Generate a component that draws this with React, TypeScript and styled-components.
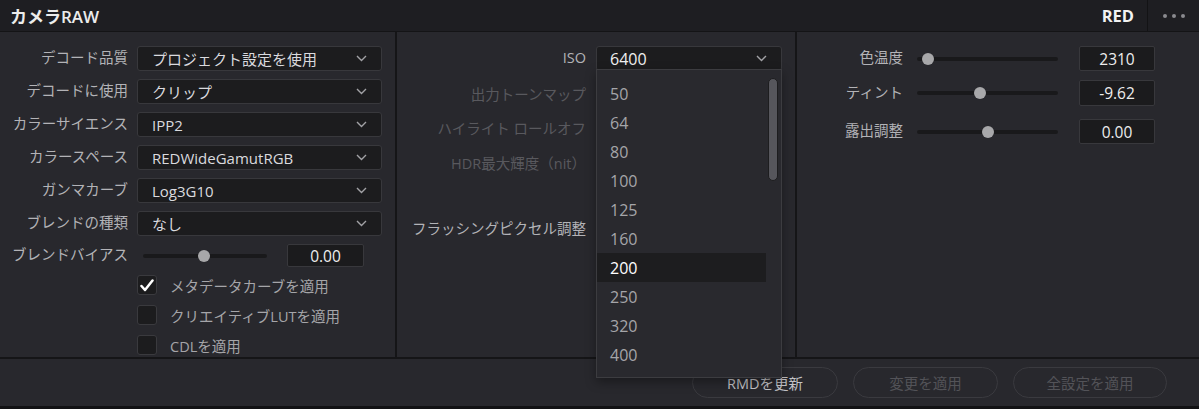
import React from "react";
import styled, { createGlobalStyle } from "styled-components";

const GlobalStyle = createGlobalStyle`
  html, body { margin: 0; padding: 0; background: #121214; }
  body { font-family: "Open Sans", "Noto Sans CJK JP", sans-serif; }
  * { box-sizing: border-box; }
`;

const Frame = styled.div`
  width: 1199px;
  height: 409px;
  display: flex;
  flex-direction: column;
  background: #28282d;
  overflow: hidden;
`;

const Header = styled.header`
  height: 32px;
  flex: none;
  display: flex;
  align-items: stretch;
  background: #1e1e22;
  border-bottom: 1px solid #141416;
`;

const Title = styled.div`
  flex: 1;
  display: flex;
  align-items: center;
  padding-left: 10px;
  color: #ececec;
  font-size: 17px;
  font-weight: 600;
`;

const Tag = styled.div`
  display: flex;
  align-items: center;
  padding-right: 13px;
  color: #f2f2f2;
  font-size: 16.5px;
  font-weight: 700;
  border-right: 1px solid #131315;
`;

const Menu = styled.div`
  width: 51px;
  display: flex;
  align-items: center;
  justify-content: center;
  gap: 5px;
`;

const Dot = styled.span`
  width: 4px;
  height: 4px;
  border-radius: 50%;
  background: #8a8a8e;
`;

const Body = styled.div`
  height: 327px;
  flex: none;
  display: flex;
  border-bottom: 2px solid #151517;
`;

const Panel = styled.section<{ $w?: number; $gap: number; $clip?: boolean }>`
  ${(p) => (p.$w ? `width: ${p.$w}px; flex: none;` : `flex: 1;`)}
  border-right: 2px solid #151517;
  padding-top: 14px;
  display: flex;
  flex-direction: column;
  gap: ${(p) => p.$gap}px;
  overflow: ${(p) => (p.$clip ? "hidden" : "visible")};
  position: relative;
  &:last-child {
    border-right: none;
  }
`;

const FieldRow = styled.div<{ $cols: string; $gap: number; $h?: number; $mt?: number }>`
  display: grid;
  grid-template-columns: ${(p) => p.$cols};
  column-gap: ${(p) => p.$gap}px;
  align-items: center;
  height: ${(p) => p.$h ?? 25}px;
  margin-top: ${(p) => p.$mt ?? 0}px;
  flex: none;
`;

const Label = styled.span<{ $dim?: boolean }>`
  text-align: right;
  white-space: nowrap;
  font-size: 14.5px;
  line-height: 1;
  color: ${(p) => (p.$dim ? "#59595e" : "#b3b3b7")};
`;

const SelectBox = styled.div<{ $pl: number }>`
  position: relative;
  height: 25px;
  display: flex;
  align-items: center;
  justify-content: space-between;
  padding: 0 14px 0 ${(p) => p.$pl}px;
  background: #1c1c1e;
  border: 1px solid #38383c;
  border-radius: 3px;
  white-space: nowrap;
`;

const SelectValue = styled.span<{ $num?: boolean }>`
  font-size: ${(p) => (p.$num ? 16 : 15)}px;
  color: ${(p) => (p.$num ? "#f0f0f0" : "#dadade")};
`;

const Chevron = () => (
  <svg width="11" height="7" viewBox="0 0 11 7">
    <polyline points="1,1 5.5,5.5 10,1" fill="none" stroke="#a2a2a6" strokeWidth="1.4" />
  </svg>
);

const SliderCell = styled.div`
  display: flex;
  align-items: center;
`;

const Track = styled.div<{ $w: number; $ml?: number }>`
  position: relative;
  width: ${(p) => p.$w}px;
  margin-left: ${(p) => p.$ml ?? 0}px;
  height: 4px;
  border-radius: 2px;
  background: #19191b;
`;

const Thumb = styled.span<{ $pos: number }>`
  position: absolute;
  top: 50%;
  left: ${(p) => p.$pos}%;
  width: 12px;
  height: 12px;
  margin: -6px 0 0 -6px;
  border-radius: 50%;
  background: #a8a8aa;
`;

const ValueBox = styled.div<{ $w: number; $h: number; $ml?: number }>`
  width: ${(p) => p.$w}px;
  height: ${(p) => p.$h}px;
  margin-left: ${(p) => p.$ml ?? 0}px;
  background: #1b1b1d;
  border: 1px solid #38383c;
  border-radius: 2px;
  display: flex;
  align-items: center;
  justify-content: center;
  color: #ededed;
  font-size: 15.5px;
`;

const CheckGroup = styled.div`
  display: flex;
  flex-direction: column;
  gap: 10px;
  padding-left: 137px;
`;

const CheckRow = styled.label`
  display: flex;
  align-items: center;
  gap: 13px;
  height: 20px;
  flex: none;
  font-size: 14.5px;
  color: #a5a5a9;
  white-space: nowrap;
`;

const Box = styled.span`
  width: 20px;
  height: 20px;
  flex: none;
  border-radius: 3px;
  background: #1c1c1e;
  border: 1px solid #3a3a3e;
  display: flex;
  align-items: center;
  justify-content: center;
`;

const ListBox = styled.ul`
  position: absolute;
  top: calc(100% - 1px);
  left: -1px;
  width: calc(100% + 2px);
  height: 309px;
  margin: 0;
  padding: 9px 0 0 0;
  list-style: none;
  background: #29292e;
  border: 1px solid #3c3c40;
  z-index: 10;
  box-shadow: 0 4px 10px rgba(0, 0, 0, 0.35);
`;

const ListItem = styled.li<{ $selected?: boolean }>`
  width: 169px;
  height: 29px;
  display: flex;
  align-items: center;
  padding-left: 13px;
  font-size: 16px;
  color: ${(p) => (p.$selected ? "#ffffff" : "#a5a5a9")};
  background: ${(p) => (p.$selected ? "#1d1d1f" : "transparent")};
`;

const ScrollThumb = styled.span`
  position: absolute;
  top: 8px;
  right: 3px;
  width: 10px;
  height: 103px;
  border-radius: 5px;
  background: #56565c;
  border: 1px solid #1d1d1f;
`;

const Footer = styled.footer`
  flex: 1;
  display: flex;
  align-items: center;
  justify-content: flex-end;
  gap: 15px;
  padding-right: 32px;
  border-bottom: 3px solid #121214;
`;

const PillButton = styled.button<{ $w: number; $enabled?: boolean }>`
  width: ${(p) => p.$w}px;
  height: 31px;
  padding: 0;
  border-radius: 16px;
  background: transparent;
  border: 1px solid #3a3a3f;
  color: ${(p) => (p.$enabled ? "#c2c2c6" : "#535358")};
  font-family: inherit;
  font-size: 14.5px;
`;

const leftSelects: [string, string][] = [
  ["デコード品質", "プロジェクト設定を使用"],
  ["デコードに使用", "クリップ"],
  ["カラーサイエンス", "IPP2"],
  ["カラースペース", "REDWideGamutRGB"],
  ["ガンマカーブ", "Log3G10"],
  ["ブレンドの種類", "なし"],
];

const checks: [string, boolean][] = [
  ["メタデータカーブを適用", true],
  ["クリエイティブLUTを適用", false],
  ["CDLを適用", false],
];

const isoValues = ["50", "64", "80", "100", "125", "160", "200", "250", "320", "400"];

const midLabels: { label: string; mt: number }[] = [
  { label: "出力トーンマップ", mt: 11.5 },
  { label: "ハイライト ロールオフ", mt: 9 },
  { label: "HDR最大輝度（nit）", mt: 10 },
];

const rightSliders: { label: string; pos: number; value: string; h: number; mt: number }[] = [
  { label: "色温度", pos: 8, value: "2310", h: 25, mt: 0 },
  { label: "ティント", pos: 45, value: "-9.62", h: 26, mt: 0 },
  { label: "露出調整", pos: 50, value: "0.00", h: 25, mt: 4 },
];

const LEFT_COLS = "128px 245px";
const MID_COLS = "189px 186px";
const RIGHT_COLS = "106px 141px 83px";

export default function App() {
  return (
    <>
      <GlobalStyle />
      <Frame>
        <Header>
          <Title>カメラRAW</Title>
          <Tag>RED</Tag>
          <Menu>
            <Dot />
            <Dot />
            <Dot />
          </Menu>
        </Header>
        <Body>
          <Panel $w={397} $gap={8} $clip>
            {leftSelects.map(([label, value]) => (
              <FieldRow key={label} $cols={LEFT_COLS} $gap={9}>
                <Label>{label}</Label>
                <SelectBox $pl={14}>
                  <SelectValue>{value}</SelectValue>
                  <Chevron />
                </SelectBox>
              </FieldRow>
            ))}
            <FieldRow $cols={LEFT_COLS} $gap={9} $h={23}>
              <Label>ブレンドバイアス</Label>
              <SliderCell>
                <Track $w={124} $ml={6}>
                  <Thumb $pos={49} />
                </Track>
                <ValueBox $w={77} $h={23} $ml={20}>
                  0.00
                </ValueBox>
              </SliderCell>
            </FieldRow>
            <CheckGroup>
              {checks.map(([label, on]) => (
                <CheckRow key={label}>
                  <Box>
                    {on && (
                      <svg width="14" height="13" viewBox="0 0 14 13">
                        <polyline
                          points="1.5,7 5,11 12.5,1.5"
                          fill="none"
                          stroke="#ffffff"
                          strokeWidth="2.5"
                          strokeLinecap="round"
                          strokeLinejoin="round"
                        />
                      </svg>
                    )}
                  </Box>
                  {label}
                </CheckRow>
              ))}
            </CheckGroup>
          </Panel>

          <Panel $w={400} $gap={0}>
            <FieldRow $cols={MID_COLS} $gap={10}>
              <Label>ISO</Label>
              <SelectBox $pl={13}>
                <SelectValue $num>6400</SelectValue>
                <Chevron />
                <ListBox>
                  {isoValues.map((v) => (
                    <ListItem key={v} $selected={v === "200"}>
                      {v}
                    </ListItem>
                  ))}
                  <ScrollThumb />
                </ListBox>
              </SelectBox>
            </FieldRow>
            {midLabels.map((m) => (
              <FieldRow key={m.label} $cols={MID_COLS} $gap={10} $mt={m.mt}>
                <Label $dim>{m.label}</Label>
              </FieldRow>
            ))}
            <FieldRow $cols={MID_COLS} $gap={10} $mt={40}>
              <Label>フラッシングピクセル調整</Label>
            </FieldRow>
          </Panel>

          <Panel $gap={9}>
            {rightSliders.map((s) => (
              <FieldRow key={s.label} $cols={RIGHT_COLS} $gap={14} $h={s.h} $mt={s.mt}>
                <Label>{s.label}</Label>
                <Track $w={141}>
                  <Thumb $pos={s.pos} />
                </Track>
                <ValueBox $w={76} $h={s.h} $ml={7}>
                  {s.value}
                </ValueBox>
              </FieldRow>
            ))}
          </Panel>
        </Body>
        <Footer>
          <PillButton $w={146} $enabled>
            RMDを更新
          </PillButton>
          <PillButton $w={145}>変更を適用</PillButton>
          <PillButton $w={154}>全設定を適用</PillButton>
        </Footer>
      </Frame>
    </>
  );
}
